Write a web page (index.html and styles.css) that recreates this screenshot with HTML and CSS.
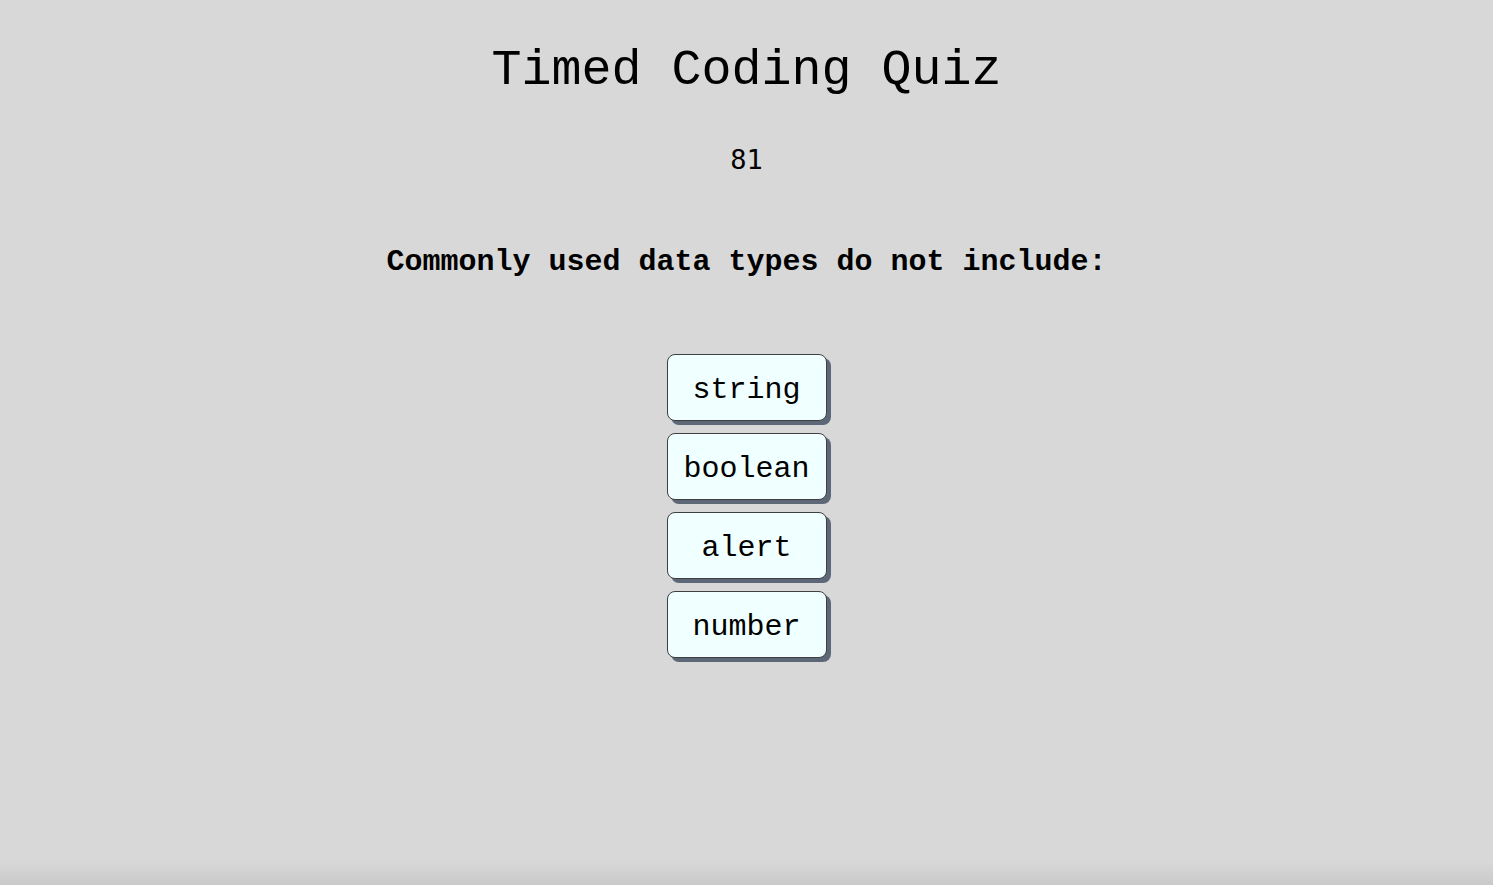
FILE: index.html
```html
<!DOCTYPE html>
<html lang="en">
<head>
<meta charset="utf-8">
<title>Timed Coding Quiz</title>
<link rel="stylesheet" href="styles.css">
</head>
<body>
<main class="quiz">
  <h1 class="title">Timed Coding Quiz</h1>
  <div class="timer">81</div>
  <h2 class="question">Commonly used data types do not include:</h2>
  <div class="choices">
    <button class="choice">string</button>
    <button class="choice">boolean</button>
    <button class="choice">alert</button>
    <button class="choice">number</button>
  </div>
</main>
</body>
</html>
```
FILE: styles.css
```css
html {
  height: 100%;
  background: linear-gradient(to bottom, #d8d8d8 0, #d8d8d8 calc(100% - 24px), #c9c9c9 100%);
}
body {
  margin: 0;
  min-height: 100%;
  font-family: "Liberation Mono", "Courier New", monospace;
  color: #000;
}
.quiz {
  display: flex;
  flex-direction: column;
  align-items: center;
  padding-top: 42px;
}
.title {
  margin: 0;
  font-size: 50px;
  font-weight: normal;
  line-height: 58px;
}
.timer {
  margin-top: 42px;
  font-family: "DejaVu Sans Mono", monospace;
  font-size: 27px;
  line-height: 36px;
}
.question {
  margin: 66px 0 0;
  font-size: 30px;
  font-weight: bold;
  line-height: 36px;
}
.choices {
  margin-top: 74px;
  display: flex;
  flex-direction: column;
  align-items: center;
  gap: 12px;
}
.choice {
  width: 160px;
  height: 67px;
  padding: 4px 0 0;
  font-family: "Liberation Mono", "Courier New", monospace;
  font-size: 30px;
  color: #000;
  background: #f0ffff;
  border: 1.5px solid #3f3f3f;
  border-radius: 8px;
  box-shadow: 4px 4px 0 #5c6878;
  cursor: pointer;
}
```
